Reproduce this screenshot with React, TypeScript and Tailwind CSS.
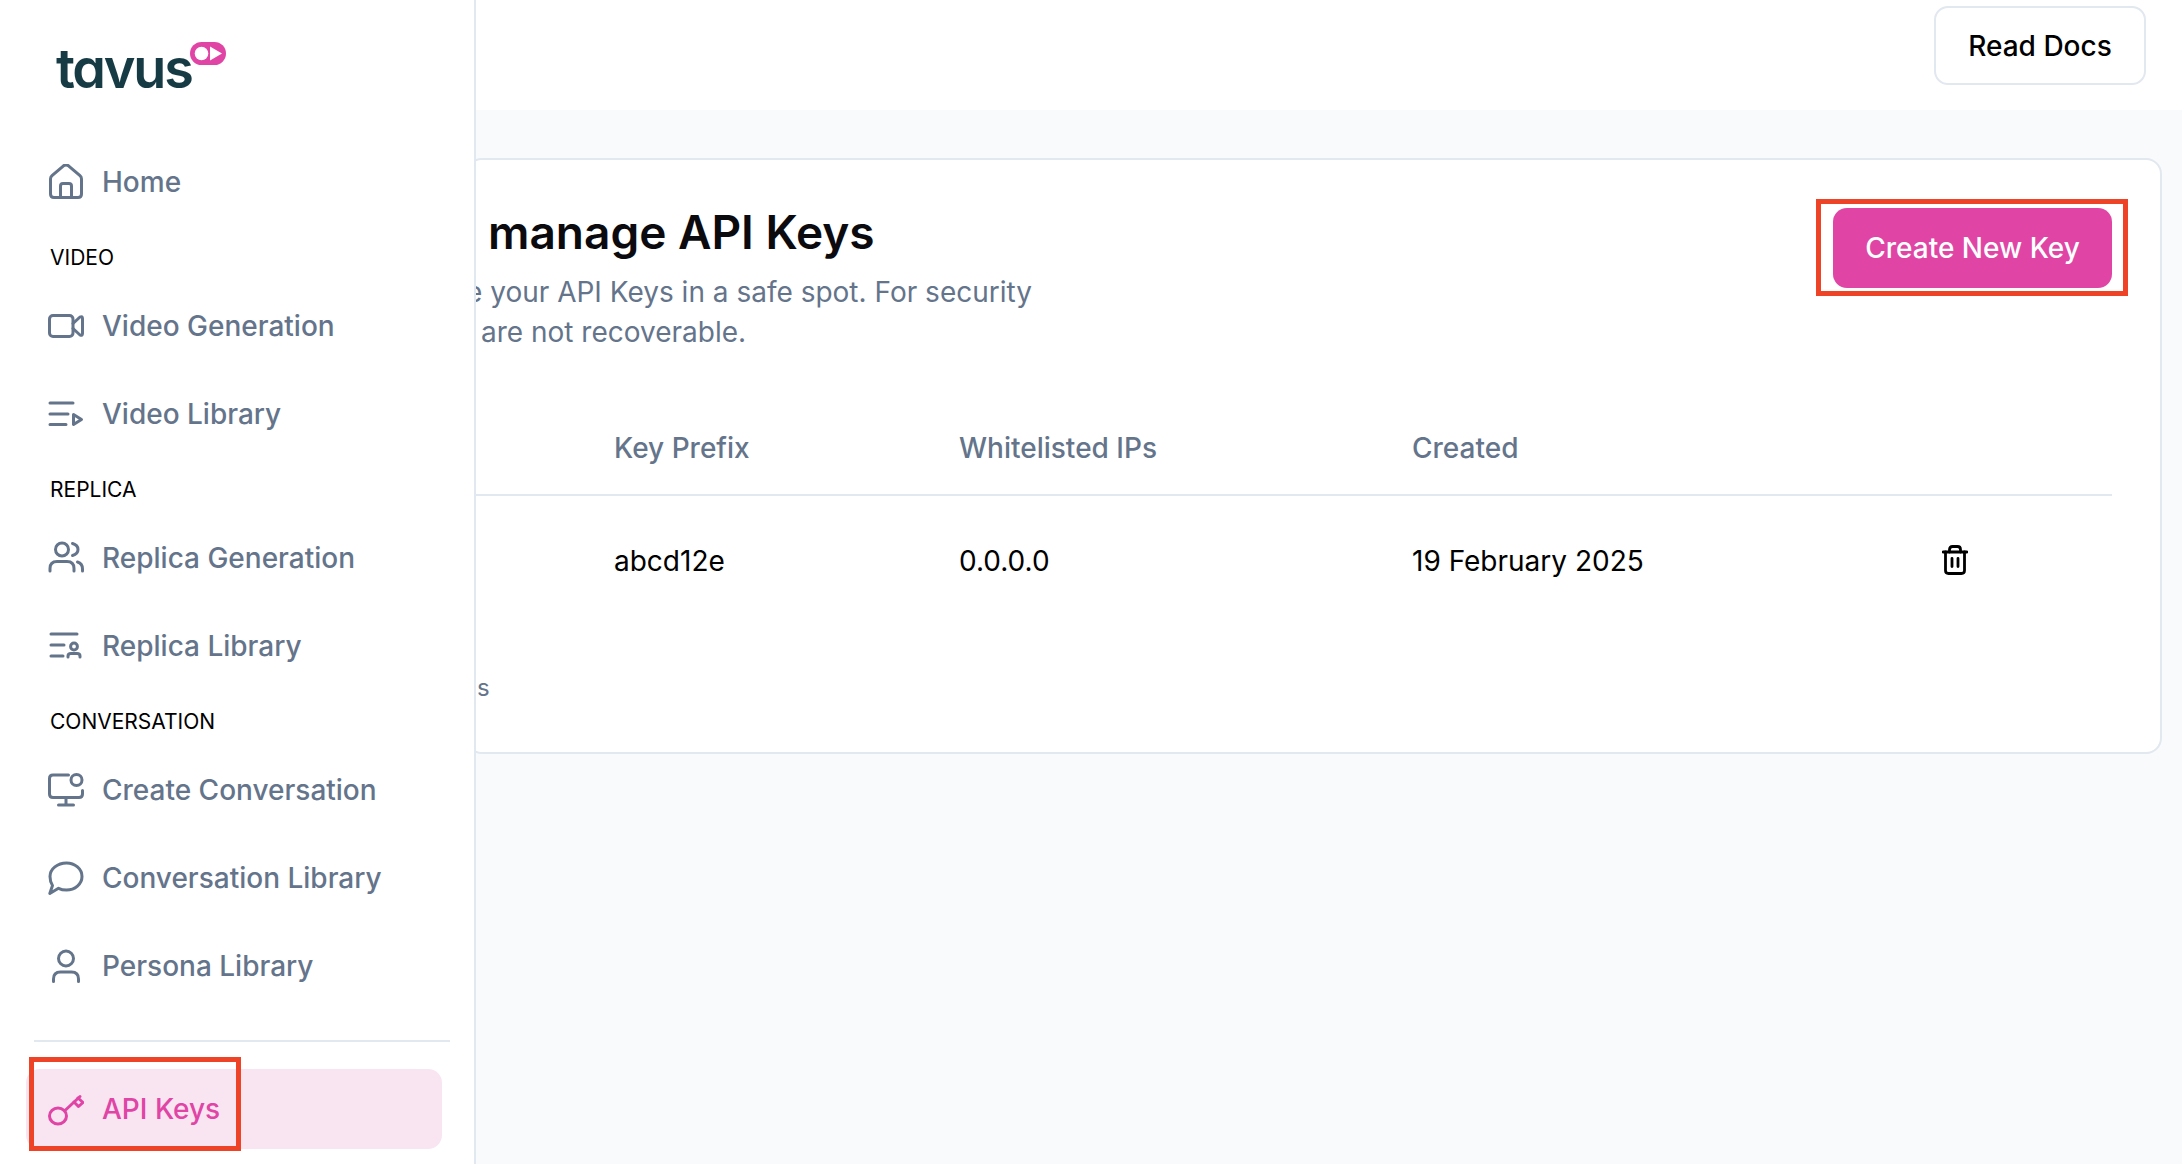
import type { ReactNode } from 'react';

const HomeIcon = () => (
    <svg width="36" height="36" viewBox="0 0 36 36" fill="none" stroke="currentColor" strokeWidth="3" strokeLinejoin="round" strokeLinecap="round">
        <path d="M2.5 15 Q2.5 13 4 11.7 L15.5 1.8 Q18 0 20.5 1.8 L32 11.7 Q33.5 13 33.5 15 V30 Q33.5 33.5 30 33.5 H6 Q2.5 33.5 2.5 30 Z" />
        <path d="M12.5 33.5 V22 Q12.5 19.5 15 19.5 H21 Q23.5 19.5 23.5 22 V33.5" />
    </svg>
);

const VideoIcon = () => (
    <svg width="36" height="36" viewBox="0 0 36 36" fill="none" stroke="currentColor" strokeWidth="3" strokeLinejoin="round" strokeLinecap="round">
        <rect x="1.5" y="7.5" width="23.5" height="21" rx="3.5" />
        <path d="M25 15.5 L32 9 Q34.5 7.8 34.5 10.5 V25.5 Q34.5 28.2 32 27 L25 20.5" />
    </svg>
);

const VideoListIcon = () => (
    <svg width="36" height="36" viewBox="0 0 36 36" fill="none" stroke="currentColor" strokeWidth="3" strokeLinejoin="round" strokeLinecap="round">
        <path d="M2 7 H25 M2 18 H20 M2 28.5 H18" />
        <path d="M25.5 18.5 L33.5 23.5 L25.5 28.5 Z" />
    </svg>
);

const UsersIcon = () => (
    <svg width="36" height="36" viewBox="0 0 36 36" fill="none" stroke="currentColor" strokeWidth="3" strokeLinejoin="round" strokeLinecap="round">
        <circle cx="14" cy="9.5" r="6.5" />
        <path d="M2 31 V28.5 Q2 21.5 9 21.5 H19 Q26 21.5 26 28.5 V31" />
        <path d="M24.5 3.5 Q30 5 30 9.5 Q30 14 24.5 15.5" />
        <path d="M29.5 22 Q34.5 23.5 34.5 29 V31" />
    </svg>
);

const ReplicaListIcon = () => (
    <svg width="36" height="36" viewBox="0 0 36 36" fill="none" stroke="currentColor" strokeWidth="3" strokeLinejoin="round" strokeLinecap="round">
        <path d="M3 6 H29 M3 17 H16 M3 28 H15" />
        <circle cx="26" cy="18.5" r="3.4" />
        <path d="M20 29 V28 Q20 25.5 23 25.5 H29 Q32 25.5 32 28 V29" />
    </svg>
);

const MonitorIcon = () => (
    <svg width="36" height="36" viewBox="0 0 36 36" fill="none" stroke="currentColor" strokeWidth="3" strokeLinejoin="round" strokeLinecap="round">
        <path d="M20.5 3 H5 Q1.5 3 1.5 6.5 V22 Q1.5 25.5 5 25.5 H31 Q34.5 25.5 34.5 22 V18.5" />
        <path d="M18 25.5 V32.5 M10.5 33 H25.5" />
        <circle cx="28.5" cy="8" r="5.5" />
    </svg>
);

const ChatIcon = () => (
    <svg width="36" height="36" viewBox="0 0 36 36" fill="none" stroke="currentColor" strokeWidth="3" strokeLinejoin="round" strokeLinecap="round">
        <path d="M18.5 3 C27 3 34 9 34 16.5 C34 24 27 30 18.5 30 C15.5 30 13 29.5 10.5 28.3 L1.8 33.5 L4.5 25.5 C2.8 23 2 20 2 16.5 C2 9 9.5 3 18.5 3 Z" />
    </svg>
);

const PersonIcon = () => (
    <svg width="36" height="36" viewBox="0 0 36 36" fill="none" stroke="currentColor" strokeWidth="3" strokeLinejoin="round" strokeLinecap="round">
        <circle cx="18" cy="10.5" r="7.5" />
        <path d="M5.5 33.5 V31 Q5.5 24 12.5 24 H23.5 Q30.5 24 30.5 31 V33.5" />
    </svg>
);

const KeyIcon = () => (
    <svg width="36" height="36" viewBox="0 0 36 36" fill="none" stroke="currentColor" strokeWidth="3" strokeLinejoin="round" strokeLinecap="round">
        <ellipse cx="10" cy="25" rx="8.5" ry="8" />
        <path d="M17 19.5 L32 5.5" />
        <path d="M26 11 L30.5 15.5 L35 11.5 L30 7" />
    </svg>
);

const TrashIcon = () => (
    <svg className="-mt-[2px]" width="26" height="30" viewBox="0 0 26 30" fill="none" stroke="currentColor" strokeWidth="2.8" strokeLinejoin="round" strokeLinecap="round">
        <path d="M1 7 H25" />
        <path d="M3.5 7 V25.5 Q3.5 28.5 6.5 28.5 H19.5 Q22.5 28.5 22.5 25.5 V7" />
        <path d="M7.5 7 V4.5 Q7.5 1.5 10.5 1.5 H15.5 Q18.5 1.5 18.5 4.5 V7" />
        <path d="M10 13.5 V21.5 M16 13.5 V21.5" />
    </svg>
);

const NavItem = ({ icon, label }: { icon: ReactNode; label: string }) => (
    <div className="flex items-center h-[88px] pl-[48px] gap-[18px] text-[#64748B]">
        {icon}
        <span className="text-[28px] font-medium">{label}</span>
    </div>
);

const NavLabel = ({ children }: { children: ReactNode }) => (
    <div className="mt-[18px] mb-[10px] h-[28px] pl-[50px] text-[21px] leading-[28px] text-black">{children}</div>
);

const Sidebar = () => (
    <aside className="w-[476px] shrink-0 h-full bg-white border-r-2 border-[#E2E8F0]">
        {/* Logo */}
        <div className="h-[138px] relative">
            <div className="absolute left-[56px] top-[39px] text-[54px] leading-[60px] font-semibold tracking-[-2.2px] text-[#163B45] [font-feature-settings:'cv11']">
                tavus
            </div>
            <svg className="absolute left-[190px] top-[42px]" width="36" height="23" viewBox="0 0 36 23">
                <rect width="36" height="23" rx="11.5" fill="#E045A6" />
                <circle cx="11.5" cy="11.5" r="6.8" fill="#fff" />
                <path d="M20 4.5 L32 11.5 L20 18.5 Z" fill="#fff" />
            </svg>
        </div>

        <NavItem icon={<HomeIcon />} label="Home" />

        <NavLabel>VIDEO</NavLabel>
        <NavItem icon={<VideoIcon />} label="Video Generation" />
        <NavItem icon={<VideoListIcon />} label="Video Library" />

        <NavLabel>REPLICA</NavLabel>
        <NavItem icon={<UsersIcon />} label="Replica Generation" />
        <NavItem icon={<ReplicaListIcon />} label="Replica Library" />

        <NavLabel>CONVERSATION</NavLabel>
        <NavItem icon={<MonitorIcon />} label="Create Conversation" />
        <NavItem icon={<ChatIcon />} label="Conversation Library" />
        <NavItem icon={<PersonIcon />} label="Persona Library" />

        <div className="mt-[30px] ml-[34px] w-[416px] h-[2px] bg-[#E2E8F0]" />

        {/* Active item */}
        <div className="relative mt-[27px] ml-[26px] w-[416px] h-[80px] rounded-[14px] bg-[#F9E4F2] flex items-center pl-[22px] gap-[18px] text-[#E045A6]">
            <KeyIcon />
            <span className="text-[28px] font-medium">API Keys</span>
            <div className="absolute left-[3px] -top-[12px] w-[212px] h-[94px] border-[5px] border-[#EE4327]" />
        </div>
    </aside>
);

const ApiKeysCard = () => (
    <div className="ml-[-10px] h-[596px] bg-white border-2 border-[#E2E8F0] rounded-[16px] pt-[48px] pl-[8px] pr-[48px]">
        <div className="flex justify-between items-start">
            <div className="-mt-[4px]">
                <h1 className="ml-[12px] text-[46px] leading-[56px] font-semibold text-[#0B0B0F]">manage API Keys</h1>
                <p className="mt-[12px] text-[28px] leading-[40px] text-[#64748B]">
                    <span className="block -ml-[10px]">e your API Keys in a safe spot. For security</span>
                    <span className="block ml-[5px]">are not recoverable.</span>
                </p>
            </div>
            <button className="relative w-[279px] h-[80px] rounded-[14px] bg-[#E045A6] text-white text-[28px] font-medium">
                Create New Key
                <span className="absolute -left-[17px] -top-[9px] w-[312px] h-[97px] border-[5px] border-[#EE4327]" />
            </button>
        </div>

        <div className="mt-[48px]">
            <div className="grid grid-cols-[138px_345px_453px_1fr] items-center h-[96px] pt-[2px] border-b-2 border-[#E2E8F0] text-[28px] font-medium text-[#64748B]">
                <span />
                <span>Key Prefix</span>
                <span>Whitelisted IPs</span>
                <span>Created</span>
            </div>
            <div className="grid grid-cols-[138px_345px_453px_1fr] items-center h-[130px] text-[28px] text-black">
                <span />
                <span>abcd12e</span>
                <span>0.0.0.0</span>
                <div className="flex items-center">
                    <span className="w-[530px]">19 February 2025</span>
                    <TrashIcon />
                </div>
            </div>
        </div>

        <div className="mt-[46px] ml-[1px] text-[24px] leading-[32px] text-[#64748B]">s</div>
    </div>
);

export default function App() {
    return (
        <div className="flex w-[2182px] h-[1164px] overflow-hidden bg-white font-['Inter',sans-serif]">
            <Sidebar />
            <main className="flex-1 min-w-0 flex flex-col overflow-hidden">
                <header className="h-[110px] shrink-0 bg-white flex justify-end items-start pt-[6px] pr-[36px]">
                    <button className="w-[212px] h-[79px] rounded-[14px] border-2 border-[#E2E8F0] text-[28px] font-medium text-black bg-white">
                        Read Docs
                    </button>
                </header>
                <div className="flex-1 bg-[#F8FAFC] pt-[48px] pr-[20px]">
                    <ApiKeysCard />
                </div>
            </main>
        </div>
    );
}
